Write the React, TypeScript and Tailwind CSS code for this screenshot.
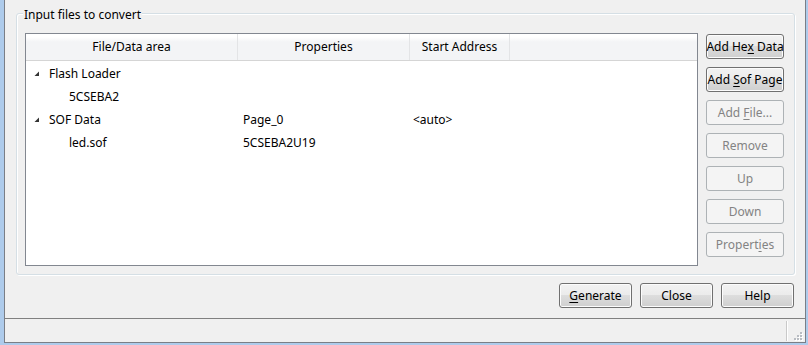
import React from "react";

const enabledBtn =
  "h-[25px] pt-[1px] rounded-[3px] border border-[#707070] bg-[linear-gradient(#f2f2f2_0%,#ebebeb_50%,#dddddd_50%,#cfcfcf_100%)] shadow-[inset_0_0_0_1px_#fcfcfc] text-black flex items-center justify-center whitespace-nowrap";
const disabledBtn =
  "h-[25px] pt-[1px] rounded-[3px] border border-[#adb2b5] bg-[#f4f4f4] text-[#838383] flex items-center justify-center whitespace-nowrap";

function Tri() {
  return (
    <svg width="5" height="5" viewBox="0 0 5 5" className="block">
      <polygon points="5,0.5 5,5 0.5,5" fill="#333333" />
    </svg>
  );
}

function Row({
  level,
  expanded,
  name,
  prop,
  addr,
}: {
  level: number;
  expanded?: boolean;
  name: string;
  prop?: string;
  addr?: string;
}) {
  return (
    <div className="flex h-[23px] items-center">
      <div className="w-[212px] flex items-center">
        {level === 0 ? (
          <>
            <div className="w-[8px]" />
            <div className="w-[15px] flex">{expanded && <Tri />}</div>
            <span>{name}</span>
          </>
        ) : (
          <span className="pl-[43px]">{name}</span>
        )}
      </div>
      <div className="w-[172px] pl-[5px]">{prop}</div>
      <div className="w-[100px] pl-[3px]">{addr}</div>
    </div>
  );
}

export default function App() {
  return (
    <div
      className="w-[808px] h-[345px] bg-[#aecbeb] pl-[4px] pr-[2px] pb-[2px] flex text-[12px] leading-none text-black"
      style={{ fontFamily: '"Noto Sans", "Open Sans", sans-serif' }}
    >
      <div className="flex-1 flex flex-col bg-[#f0f0f0] border-l border-r border-b border-[#7a7e86]">
        <div className="h-[318px] flex flex-col">
          <div className="pt-[13px] pl-[11px]">
            <div className="relative w-[779px] h-[262px] rounded-[3px] border border-[#d5dfe5] shadow-[inset_1px_1px_0_#ffffff,1px_1px_0_#ffffff]">
              <div className="absolute left-[6px] top-[-6px] px-[1px] bg-[#f0f0f0] leading-[14px]">
                Input files to convert
              </div>
              <div className="flex pt-[19px] pl-[8px] gap-[8px]">
                <div className="w-[673px] h-[233px] border border-[#828790] bg-white flex flex-col">
                  <div className="h-[27px] flex border-b border-[#d5d5d5] bg-[linear-gradient(#ffffff_0%,#ffffff_12%,#f3f4f6_30%,#f3f4f6_100%)]">
                    <div className="w-[212px] border-r border-[#e3e4e6] flex items-center justify-center">
                      File/Data area
                    </div>
                    <div className="w-[172px] border-r border-[#e3e4e6] flex items-center justify-center">
                      Properties
                    </div>
                    <div className="w-[100px] border-r border-[#e3e4e6] flex items-center justify-center">
                      Start Address
                    </div>
                    <div className="flex-1" />
                  </div>
                  <div className="pt-[1px]">
                    <Row level={0} expanded name="Flash Loader" />
                    <Row level={1} name="5CSEBA2" />
                    <Row level={0} expanded name="SOF Data" prop="Page_0" addr="<auto>" />
                    <Row level={1} name="led.sof" prop="5CSEBA2U19" />
                  </div>
                </div>
                <div className="w-[78px] mt-[1px] flex flex-col gap-[8px]">
                  <div className={enabledBtn}>
                    Add He<span className="underline underline-offset-2">x</span>&nbsp;Data
                  </div>
                  <div className={enabledBtn}>
                    Add&nbsp;<span className="underline underline-offset-2">S</span>of Page
                  </div>
                  <div className={disabledBtn}>
                    Add&nbsp;<span className="underline underline-offset-2">F</span>ile...
                  </div>
                  <div className={disabledBtn}>Remove</div>
                  <div className={disabledBtn}>Up</div>
                  <div className={disabledBtn}>Down</div>
                  <div className={disabledBtn}>
                    Propert<span className="underline underline-offset-2">i</span>es
                  </div>
                </div>
              </div>
            </div>
          </div>
          <div className="mt-[8px] flex justify-end pr-[11px] gap-[8px]">
            <div className={enabledBtn + " w-[73px]"}>
              <span className="underline underline-offset-2">G</span>enerate
            </div>
            <div className={enabledBtn + " w-[73px]"}>Close</div>
            <div className={enabledBtn + " w-[73px]"}>Help</div>
          </div>
        </div>
        <div className="h-[24px] border-t border-[#808080] flex justify-end relative">
          <div className="mt-[2px] mr-[18px] w-[1px] h-[20px] bg-[#c9c9c9] shadow-[1px_0_0_#ffffff]" />
          <svg
            width="9"
            height="9"
            viewBox="0 0 9 9"
            className="absolute right-[2px] bottom-[1px]"
          >
            {[
              [6, 0],
              [3, 3],
              [6, 3],
              [0, 6],
              [3, 6],
              [6, 6],
            ].map(([x, y], i) => (
              <g key={i}>
                <rect x={x + 1} y={y + 1} width="2" height="2" fill="#ffffff" />
                <rect x={x} y={y} width="2" height="2" fill="#b8bcc2" />
              </g>
            ))}
          </svg>
        </div>
      </div>
    </div>
  );
}
